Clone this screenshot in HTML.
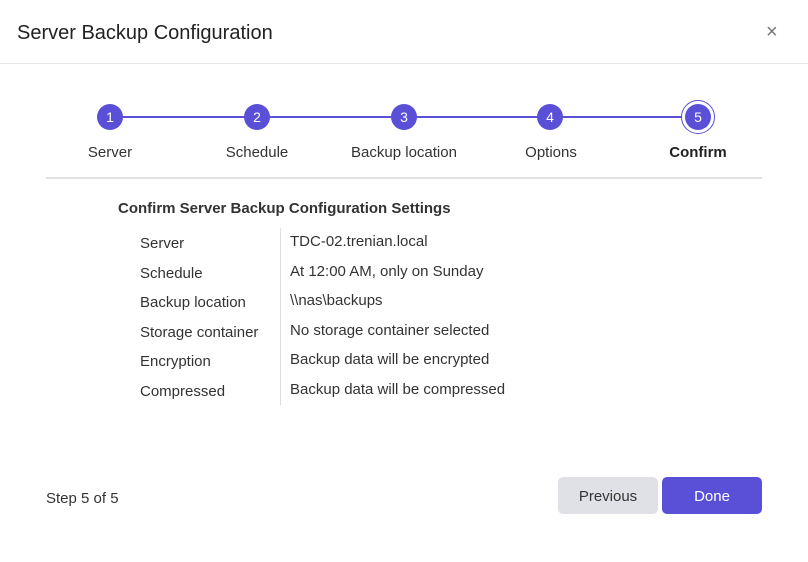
<!DOCTYPE html>
<html><head><style>
*{margin:0;padding:0;box-sizing:border-box}
body{width:808px;height:562px;background:#fff;font-family:"Segoe UI","Liberation Sans",sans-serif;color:#333;position:relative;overflow:hidden}
.a{position:absolute;white-space:nowrap}
.c{position:absolute;width:26px;height:26px;border-radius:50%;background:#5a50d8;color:#fff;font-size:14px;text-align:center;line-height:27px;top:104px}
.lbl{position:absolute;top:144px;font-size:15px;color:#333;transform:translateX(-50%)}
.r{position:absolute;font-size:15px;color:#333}
</style></head><body>
<div class="a" style="left:17px;top:22px;font-size:20px;color:#222">Server Backup Configuration</div>
<div class="a" style="left:766px;top:21px;font-size:20px;color:#777">×</div>
<div class="a" style="left:0;top:63px;width:808px;height:1px;background:#e6e6e6"></div>
<div class="a" style="left:110px;top:116px;width:588px;height:2px;background:#5a50d8"></div>
<div class="c" style="left:97px">1</div>
<div class="c" style="left:244px">2</div>
<div class="c" style="left:391px">3</div>
<div class="c" style="left:537px">4</div>
<div class="a" style="left:681px;top:100px;width:34px;height:34px;border-radius:50%;border:1.5px solid #5a50d8;background:#fff"></div>
<div class="c" style="left:685px">5</div>
<div class="lbl" style="left:110px">Server</div>
<div class="lbl" style="left:257px">Schedule</div>
<div class="lbl" style="left:404px">Backup location</div>
<div class="lbl" style="left:551px">Options</div>
<div class="lbl" style="left:698px;font-weight:bold;color:#222">Confirm</div>
<div class="a" style="left:46px;top:177px;width:716px;height:2px;background:#e2e2e2"></div>
<div class="a" style="left:118px;top:200px;font-size:15px;font-weight:bold;color:#333">Confirm Server Backup Configuration Settings</div>
<div class="a" style="left:280px;top:228px;width:1px;height:177px;background:#ddd"></div>
<div class="r" style="left:140px;top:235px">Server</div><div class="r" style="left:290px;top:233px">TDC-02.trenian.local</div>
<div class="r" style="left:140px;top:265px">Schedule</div><div class="r" style="left:290px;top:263px">At 12:00 AM, only on Sunday</div>
<div class="r" style="left:140px;top:294px">Backup location</div><div class="r" style="left:290px;top:292px">\\nas\backups</div>
<div class="r" style="left:140px;top:324px">Storage container</div><div class="r" style="left:290px;top:322px">No storage container selected</div>
<div class="r" style="left:140px;top:353px">Encryption</div><div class="r" style="left:290px;top:351px">Backup data will be encrypted</div>
<div class="r" style="left:140px;top:383px">Compressed</div><div class="r" style="left:290px;top:381px">Backup data will be compressed</div>
<div class="a" style="left:46px;top:490px;font-size:15px;color:#333">Step 5 of 5</div>
<div class="a" style="left:558px;top:477px;width:100px;height:37px;border-radius:5px;background:#dfe1e6;color:#333;font-size:15px;text-align:center;line-height:40px">Previous</div>
<div class="a" style="left:662px;top:477px;width:100px;height:37px;border-radius:5px;background:#5a50d8;color:#fff;font-size:15px;text-align:center;line-height:40px">Done</div>
</body></html>
